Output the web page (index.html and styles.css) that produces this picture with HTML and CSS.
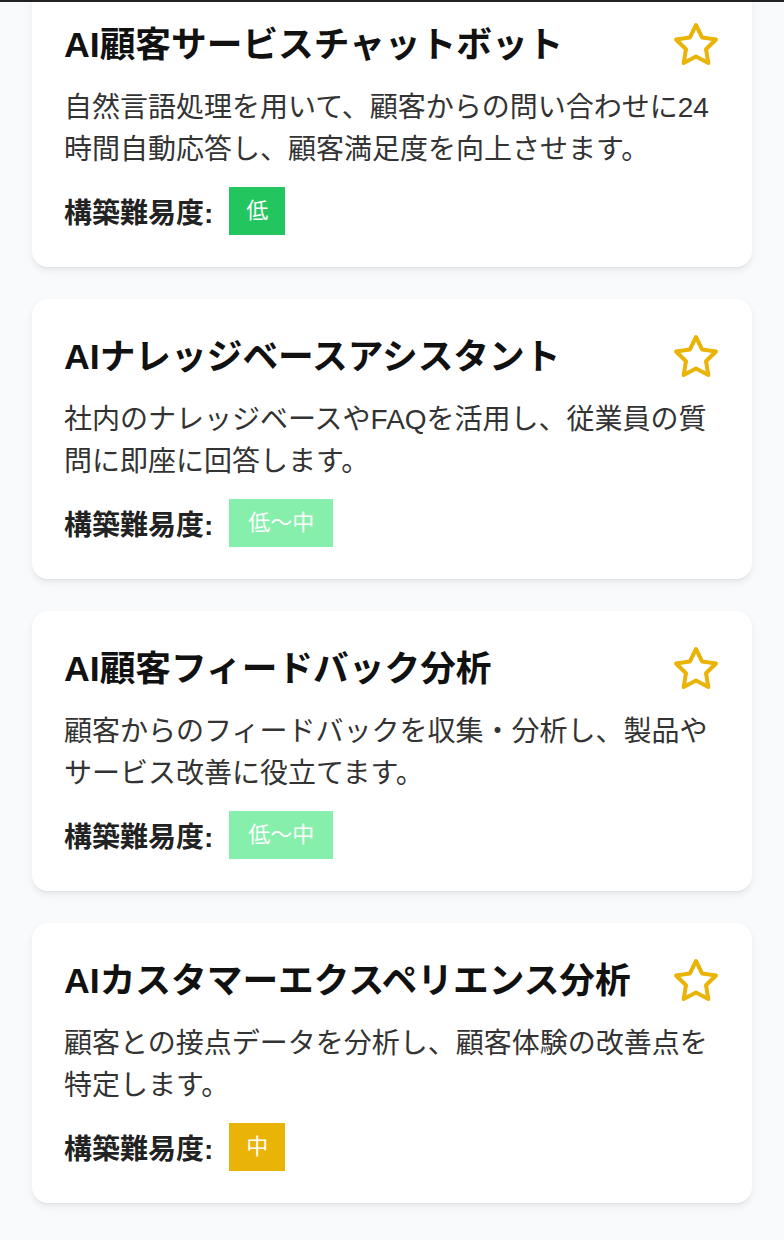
FILE: index.html
```html
<!DOCTYPE html>
<html lang="ja">
<head>
<meta charset="utf-8">
<title>AI ソリューション</title>
<link rel="stylesheet" href="styles.css">
</head>
<body>
<div class="topbar"></div>
<main class="list">
  <article class="card">
    <div class="card-head">
      <h2 class="card-title">AI顧客サービスチャットボット</h2>
      <svg class="star" viewBox="0 0 24 24"><path d="M12 2l3.09 6.26L22 9.27l-5 4.870 1.18 6.88L12 17.77l-6.18 3.25L7 14.14 2 9.27l6.91-1.01L12 2z"/></svg>
    </div>
    <p class="card-desc">自然言語処理を用いて、顧客からの問い合わせに24時間自動応答し、顧客満足度を向上させます。</p>
    <div class="diff"><span class="diff-label">構築難易度:</span><span class="badge badge-low">低</span></div>
  </article>
  <article class="card">
    <div class="card-head">
      <h2 class="card-title">AIナレッジベースアシスタント</h2>
      <svg class="star" viewBox="0 0 24 24"><path d="M12 2l3.09 6.26L22 9.27l-5 4.87 1.18 6.88L12 17.77l-6.18 3.25L7 14.14 2 9.27l6.91-1.01L12 2z"/></svg>
    </div>
    <p class="card-desc">社内のナレッジベースやFAQを活用し、従業員の質問に即座に回答します。</p>
    <div class="diff"><span class="diff-label">構築難易度:</span><span class="badge badge-lowmid">低〜中</span></div>
  </article>
  <article class="card">
    <div class="card-head">
      <h2 class="card-title">AI顧客フィードバック分析</h2>
      <svg class="star" viewBox="0 0 24 24"><path d="M12 2l3.09 6.26L22 9.27l-5 4.87 1.18 6.88L12 17.77l-6.18 3.25L7 14.14 2 9.27l6.91-1.01L12 2z"/></svg>
    </div>
    <p class="card-desc">顧客からのフィードバックを収集・分析し、製品やサービス改善に役立てます。</p>
    <div class="diff"><span class="diff-label">構築難易度:</span><span class="badge badge-lowmid">低〜中</span></div>
  </article>
  <article class="card">
    <div class="card-head">
      <h2 class="card-title">AIカスタマーエクスペリエンス分析</h2>
      <svg class="star" viewBox="0 0 24 24"><path d="M12 2l3.09 6.26L22 9.27l-5 4.87 1.18 6.88L12 17.77l-6.18 3.25L7 14.14 2 9.27l6.91-1.01L12 2z"/></svg>
    </div>
    <p class="card-desc">顧客との接点データを分析し、顧客体験の改善点を特定します。</p>
    <div class="diff"><span class="diff-label">構築難易度:</span><span class="badge badge-mid">中</span></div>
  </article>
</main>
</body>
</html>
```

FILE: styles.css
```css
html, body {
  margin: 0;
  padding: 0;
}
body {
  background: #f9fafb;
  font-family: "Liberation Sans", "Noto Sans CJK JP", sans-serif;
  color: #1a1a1a;
}
.topbar {
  position: fixed;
  top: 0;
  left: 0;
  right: 0;
  height: 2px;
  background: #222;
  z-index: 10;
}
.list {
  display: flex;
  flex-direction: column;
  gap: 32px;
  padding: 0 32px 40px;
  margin-top: -13px;
}
.card {
  background: #fff;
  border-radius: 16px;
  padding: 32px;
  box-shadow: 0 4px 10px -2px rgba(0,0,0,0.1), 0 2px 4px -2px rgba(0,0,0,0.06);
}
.card-head {
  display: flex;
  align-items: center;
  justify-content: space-between;
  gap: 16px;
  margin-bottom: 16px;
}
.card-title {
  margin: 0;
  font-size: 35.7px;
  line-height: 52px;
  font-weight: 700;
  color: #111;
}
.star {
  width: 48px;
  height: 48px;
  flex: none;
  fill: none;
  stroke: #eab308;
  stroke-width: 2;
  stroke-linejoin: round;
}
.card-desc {
  margin: 0 0 16px;
  font-size: 28px;
  line-height: 42px;
  color: #333;
}
.diff {
  display: flex;
  align-items: center;
}
.diff-label {
  font-size: 28px;
  font-weight: 700;
  color: #222;
}
.badge {
  margin-left: 16px;
  padding: 0 17px;
  height: 48px;
  line-height: 48px;
  font-size: 22px;
  color: #fff;
}
.badge-lowmid { padding: 0 19px; }
.badge-low { background: #22c55e; }
.badge-lowmid { background: #86efac; }
.badge-mid { background: #eab308; }
```
